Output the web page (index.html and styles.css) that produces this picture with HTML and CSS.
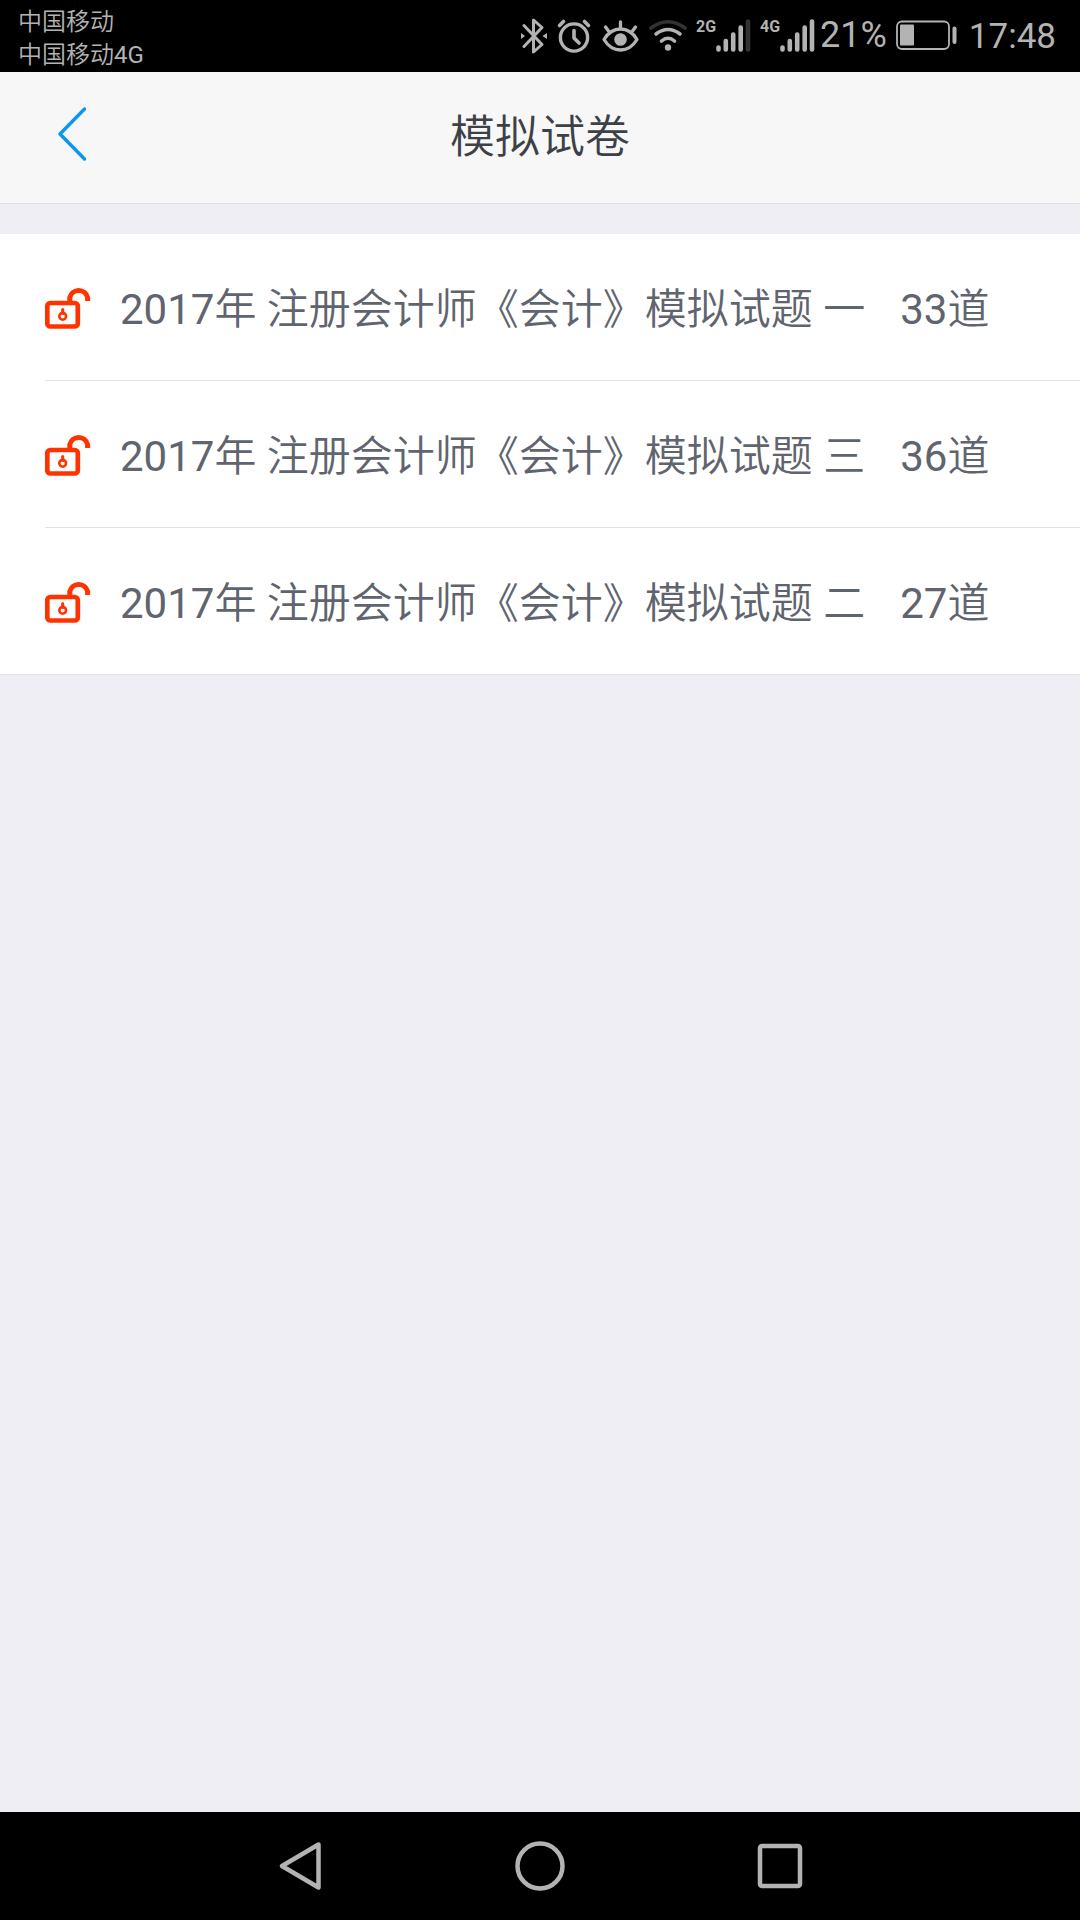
FILE: index.html
```html
<!DOCTYPE html>
<html lang="zh-CN">
<head>
<meta charset="utf-8">
<meta name="viewport" content="width=device-width, initial-scale=1">
<title>模拟试卷</title>
<link rel="stylesheet" href="styles.css">
</head>
<body>
<svg width="0" height="0" class="symbols" aria-hidden="true">
  <symbol id="unlock" viewBox="0 0 46 44">
    <rect x="2.300" y="17" width="30.500" height="23.500" rx="3" fill="none" stroke="currentColor" stroke-width="4.700"/>
    <path d="M24.800 16V11.600A9.100 9.100 0 0 1 42.600 11.600V15" fill="none" stroke="currentColor" stroke-width="5"/>
    <circle cx="17.700" cy="30.300" r="3.400" fill="none" stroke="currentColor" stroke-width="2.600"/>
    <path d="M17.700 23.500V27.500" stroke="currentColor" stroke-width="3" stroke-linecap="round"/>
  </symbol>
</svg>
<div class="statusbar">
  <div class="carriers">
    <span>中国移动</span>
    <span>中国移动4G</span>
  </div>
  <div class="indicators">
    <svg width="28" height="36" viewBox="0 0 28 36" aria-hidden="true">
      <path d="M4 7.500 22 26.500 13.500 34V2L22 9.500 4 28.500" fill="none" stroke="currentColor" stroke-width="3" stroke-linejoin="round" stroke-linecap="round"/>
      <path d="M1 15 5 18 1 21ZM27 15 22.500 18 27 21Z" fill="currentColor"/>
    </svg>
    <svg width="36" height="36" viewBox="0 0 36 36" aria-hidden="true">
      <g fill="none" stroke="currentColor" stroke-linecap="round" stroke-linejoin="round">
        <circle cx="18" cy="19.500" r="13.600" stroke-width="3.400"/>
        <path d="M18 12.500V20L23 25" stroke-width="3.600"/>
        <path d="M3.500 7.500 7.500 3.500M28.500 3.500 32.500 7.500" stroke-width="3.600"/>
      </g>
    </svg>
    <svg width="40" height="36" viewBox="0 0 40 36" aria-hidden="true">
      <g fill="none" stroke="currentColor" stroke-width="3.300" stroke-linecap="round" stroke-linejoin="round">
        <path d="M4 21.500C12.500 7.500 28.500 7.500 37 21.500C28.500 35.500 12.500 35.500 4 21.500Z"/>
        <path d="M20.500 10V4M8.500 13 5.500 9M32.500 13 35.500 9"/>
      </g>
      <circle cx="20.500" cy="21.500" r="6.300" fill="currentColor"/>
    </svg>
    <svg width="40" height="36" viewBox="0 0 40 36" aria-hidden="true">
      <g fill="none" stroke="currentColor" stroke-width="3.600" stroke-linecap="round">
        <path class="dim" d="M3 10Q20-2.500 37 10"/>
        <path d="M8 16Q20 7 32 16"/>
        <path d="M13.500 23Q20 17.500 26.500 23"/>
      </g>
      <circle cx="20" cy="29.500" r="3.200" fill="currentColor"/>
    </svg>
    <div class="signal">
      <span>2G</span>
      <svg width="36" height="36" viewBox="0 0 36 36" aria-hidden="true">
        <g stroke="currentColor" stroke-width="4.600" stroke-linecap="round">
          <path d="M2.500 29.500V31.500M9.800 23V31.500M17.200 16.500V31.500M24.700 9.500V31.500"/>
          <path class="dim" d="M32 3.500V31.500"/>
        </g>
      </svg>
    </div>
    <div class="signal">
      <span>4G</span>
      <svg width="36" height="36" viewBox="0 0 36 36" aria-hidden="true">
        <path d="M2.500 29.500V31.500M9.800 23V31.500M17.200 16.500V31.500M24.700 9.500V31.500M32 3.500V31.500" stroke="currentColor" stroke-width="4.600" stroke-linecap="round"/>
      </svg>
    </div>
    <div class="power">
      <span class="percent">21%</span>
      <svg width="62" height="36" viewBox="0 0 62 36" aria-hidden="true">
        <rect x="2" y="3.500" width="52" height="27.500" rx="5" fill="none" stroke="currentColor" stroke-width="1.800"/>
        <rect x="5" y="6.500" width="14" height="21" rx="1" fill="currentColor"/>
        <rect x="57.500" y="8.500" width="4" height="17.500" rx="2" fill="currentColor"/>
      </svg>
      <time class="clock">17:48</time>
    </div>
  </div>
</div>
<header class="header">
  <button class="back" type="button" aria-label="返回">
    <svg width="30" height="56" viewBox="0 0 30 56" aria-hidden="true">
      <path d="M28.500 3 4 28 28.500 53" fill="none" stroke="currentColor" stroke-width="3.400" stroke-linecap="round" stroke-linejoin="round"/>
    </svg>
  </button>
  <h1>模拟试卷</h1>
</header>
<main class="content">
  <ul class="papers">
    <li><a href="#paper-1"><svg class="lock" aria-hidden="true"><use href="#unlock"/></svg><span class="label">2017年 注册会计师《会计》模拟试题 一</span><span class="count">33道</span></a></li>
    <li><a href="#paper-3"><svg class="lock" aria-hidden="true"><use href="#unlock"/></svg><span class="label">2017年 注册会计师《会计》模拟试题 三</span><span class="count">36道</span></a></li>
    <li><a href="#paper-2"><svg class="lock" aria-hidden="true"><use href="#unlock"/></svg><span class="label">2017年 注册会计师《会计》模拟试题 二</span><span class="count">27道</span></a></li>
  </ul>
</main>
<nav class="navbar">
  <button type="button" aria-label="返回上一页">
    <svg width="48" height="48" viewBox="0 0 48 48" aria-hidden="true"><path d="M42.500 2.500 6 24 42.500 45.500Z"/></svg>
  </button>
  <button type="button" aria-label="主屏幕">
    <svg width="48" height="48" viewBox="0 0 48 48" aria-hidden="true"><circle cx="24" cy="24" r="22.500"/></svg>
  </button>
  <button type="button" aria-label="最近任务">
    <svg width="48" height="48" viewBox="0 0 48 48" aria-hidden="true"><rect x="4" y="4" width="40" height="40" rx="2"/></svg>
  </button>
</nav>
</body>
</html>
```
FILE: styles.css
```css
* {
  box-sizing: border-box;
}

body {
  display: flex;
  flex-direction: column;
  min-height: 100vh;
  margin: 0;
  background: #efeef4;
  color: #5f646e;
  font-family: Roboto, "Noto Sans CJK SC DemiLight", "Noto Sans CJK SC", sans-serif;
}

svg {
  display: block;
  flex: none;
}

button {
  display: flex;
  padding: 0;
  border: 0;
  background: none;
  color: inherit;
  cursor: pointer;
}

.symbols {
  position: absolute;
}

/* System status bar */
.statusbar {
  display: flex;
  justify-content: space-between;
  height: 72px;
  padding: 0 24px 0 18px;
  background: #000;
  color: #b3b3b3;
}

.carriers {
  display: flex;
  flex-direction: column;
  justify-content: center;
  padding-top: 5px;
  font-size: 24px;
  line-height: 33px;
}

.indicators {
  display: flex;
  align-items: center;
  gap: 8px;
}

.dim {
  stroke: #333;
}

.signal {
  display: flex;
}

.signal span {
  width: 20px;
  font-size: 16px;
  font-weight: 700;
  line-height: 18px;
}

.power {
  display: flex;
  align-items: center;
  gap: 8px;
  margin-left: -4px;
  font-size: 36px;
  line-height: 36px;
}

.percent {
  padding-bottom: 3px;
}

.clock {
  padding: 2px 0 0 4px;
  font-size: 35px;
}

/* Page header */
.header {
  display: grid;
  grid-template-columns: 1fr auto 1fr;
  align-items: center;
  height: 132px;
  padding: 0 56px;
  border-bottom: 1px solid #e0e0e0;
  background: #f7f7f7;
}

.back {
  justify-self: start;
  padding-bottom: 8px;
  color: #0c96ee;
}

.header h1 {
  margin: 0;
  color: #3d4145;
  font-size: 45px;
  font-weight: 350;
  line-height: 60px;
}

/* Exam paper list */
.content {
  flex: 1;
  padding-top: 30px;
}

.papers {
  margin: 0;
  padding: 0 0 0 45px;
  border-bottom: 1px solid #e2e2e4;
  background: #fff;
  list-style: none;
}

.papers li + li {
  border-top: 1px solid #e2e2e4;
}

.papers a {
  display: flex;
  align-items: center;
  height: 146px;
  padding-top: 5px;
  color: inherit;
  font-size: 42px;
  line-height: 60px;
  text-decoration: none;
}

.lock {
  width: 46px;
  height: 44px;
  margin-bottom: 4px;
  color: #ff3300;
}

.label {
  margin-left: 29px;
}

.count {
  margin-left: 35px;
}

/* System navigation bar */
.navbar {
  display: flex;
  align-items: center;
  justify-content: center;
  gap: 192px;
  height: 108px;
  background: #000;
  color: #b3b3b3;
}

.navbar svg {
  overflow: visible;
  fill: none;
  stroke: currentColor;
  stroke-width: 4.5px;
  stroke-linejoin: round;
}
```
